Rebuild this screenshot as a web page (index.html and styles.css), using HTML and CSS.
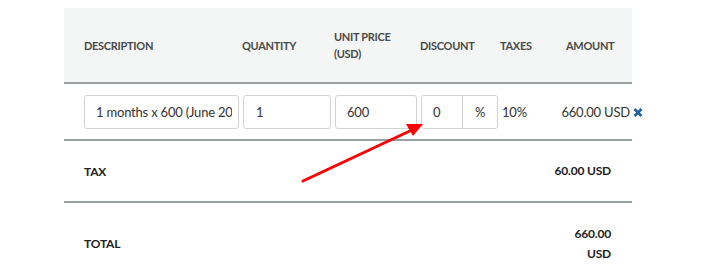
FILE: index.html
```html
<!DOCTYPE html>
<html>
<head>
<meta charset="utf-8">
<link rel="stylesheet" href="styles.css">
</head>
<body>
<div class="page">
  <div class="lines">
    <div class="grid head">
      <div class="th">DESCRIPTION</div>
      <div class="th">QUANTITY</div>
      <div class="th">UNIT PRICE<br>(USD)</div>
      <div class="th">DISCOUNT</div>
      <div class="th">TAXES</div>
      <div class="th right">AMOUNT</div>
    </div>
    <div class="grid item">
      <div class="cell"><div class="input desc"><span class="clip">1 months x 600 (June 2025)</span></div></div>
      <div class="cell"><div class="input qty">1</div></div>
      <div class="cell"><div class="input price">600</div></div>
      <div class="cell">
        <div class="group">
          <div class="g-val">0</div>
          <div class="g-unit">%</div>
        </div>
      </div>
      <div class="cell tax">10%</div>
      <div class="cell amount">
        <span>660.00 USD</span>
        <svg class="remove" width="10" height="9" viewBox="0 0 10 9"><path d="M1.5 1 L8.5 8 M8.5 1 L1.5 8" stroke="#1f5fa6" stroke-width="2.6" stroke-linecap="butt"/></svg>
      </div>
    </div>
    <div class="sum tax-row">
      <div class="label">TAX</div>
      <div class="value">60.00 USD</div>
    </div>
    <div class="sum total-row">
      <div class="label">TOTAL</div>
      <div class="value narrow">660.00 USD</div>
    </div>
  </div>
  <svg class="arrow" width="718" height="280" viewBox="0 0 718 280">
    <line x1="303" y1="181" x2="412" y2="130" stroke="#ff0000" stroke-width="3" stroke-linecap="round"/>
    <polygon points="423,124 406,124 413,136" fill="#ff0000"/>
  </svg>
</div>
</body>
</html>
```

FILE: styles.css
```css
* { box-sizing: border-box; }
html, body { margin: 0; padding: 0; background: #ffffff; }
body {
  font-family: "Lato", "Liberation Sans", sans-serif;
  color: #333333;
  font-size: 13px;
  letter-spacing: -0.2px;
}
.page {
  position: relative;
  width: 718px;
  height: 280px;
  overflow: hidden;
  padding: 8px 0 0 64px;
}
.lines { width: 568px; }
.grid {
  display: grid;
  grid-template-columns: 158px 92px 86px 80px 66px 45px;
  padding: 0 21px 0 20px;
  align-items: center;
}
.head {
  background: #f4f6f6;
  height: 76px;
  border-bottom: 2px solid #98a2a2;
}
.th {
  font-size: 11px;
  font-weight: 700;
  color: #4a4a4a;
  line-height: 17px;
  letter-spacing: -0.3px;
  white-space: nowrap;
}
.th.right { text-align: right; }
.item {
  height: 57px;
  border-bottom: 2px solid #98a2a2;
  padding-top: 1px;
}
.input {
  height: 34px;
  border: 1px solid #d0d3d6;
  border-radius: 3px;
  padding: 0 11px;
  line-height: 32px;
  white-space: nowrap;
  overflow: hidden;
  color: #333;
}
.input.desc { width: 155px; padding-right: 6px; }
.clip { display: block; overflow: hidden; }
.input.qty { width: 88px; margin-left: 1px; padding-left: 12px; }
.input.price { width: 82px; margin-left: 1px; }
.group {
  display: flex;
  width: 77px;
  height: 34px;
  margin-left: 1px;
  border: 1px solid #d0d3d6;
  border-radius: 3px;
  line-height: 32px;
}
.g-val { width: 41px; padding-left: 11px; border-right: 1px solid #d0d3d6; }
.g-unit { flex: 1; text-align: center; }
.cell.tax { padding-left: 2px; }
.cell.amount {
  display: flex;
  justify-content: flex-end;
  align-items: center;
  gap: 3px;
  margin-right: -32px;
  white-space: nowrap;
}
.remove { display: block; flex-shrink: 0; }
.sum {
  display: flex;
  justify-content: space-between;
  align-items: center;
  padding: 0 21px 0 20px;
  color: #222;
  font-weight: 700;
  font-size: 12px;
}
.tax-row {
  height: 62px;
  border-bottom: 2px solid #98a2a2;
}
.total-row { height: 80px; padding-top: 1px; }
.value { text-align: right; line-height: 20px; }
.value.narrow { width: 46px; }
.arrow {
  position: absolute;
  left: 0;
  top: 0;
  pointer-events: none;
}
```
